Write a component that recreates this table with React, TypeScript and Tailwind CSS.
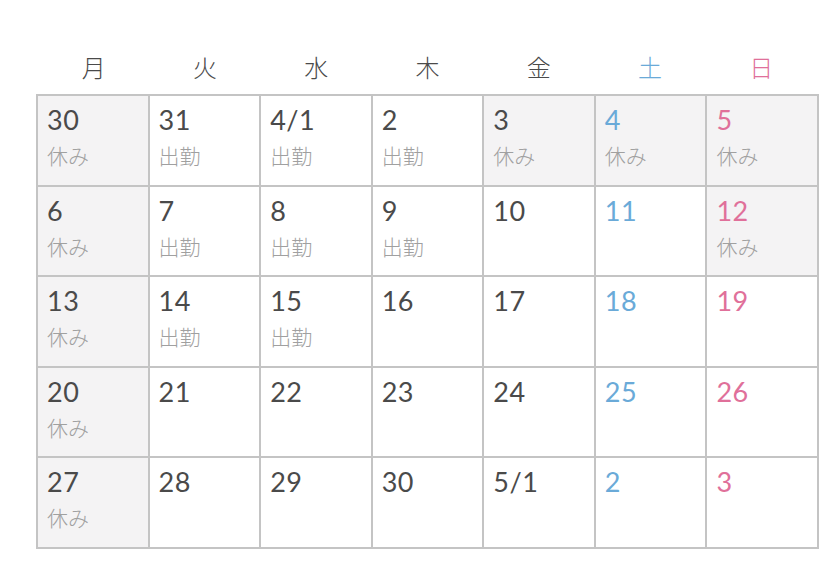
const days = ["月", "火", "水", "木", "金", "土", "日"];

type Cell = { d: string; label?: string; off?: boolean };

const weeks: Cell[][] = [
  [
    { d: "30", label: "休み", off: true },
    { d: "31", label: "出勤" },
    { d: "4/1", label: "出勤" },
    { d: "2", label: "出勤" },
    { d: "3", label: "休み", off: true },
    { d: "4", label: "休み", off: true },
    { d: "5", label: "休み", off: true },
  ],
  [
    { d: "6", label: "休み", off: true },
    { d: "7", label: "出勤" },
    { d: "8", label: "出勤" },
    { d: "9", label: "出勤" },
    { d: "10" },
    { d: "11" },
    { d: "12", label: "休み", off: true },
  ],
  [
    { d: "13", label: "休み", off: true },
    { d: "14", label: "出勤" },
    { d: "15", label: "出勤" },
    { d: "16" },
    { d: "17" },
    { d: "18" },
    { d: "19" },
  ],
  [
    { d: "20", label: "休み", off: true },
    { d: "21" },
    { d: "22" },
    { d: "23" },
    { d: "24" },
    { d: "25" },
    { d: "26" },
  ],
  [
    { d: "27", label: "休み", off: true },
    { d: "28" },
    { d: "29" },
    { d: "30" },
    { d: "5/1" },
    { d: "2" },
    { d: "3" },
  ],
];

function dayColor(i: number) {
  if (i === 5) return "text-[#6aaad8]";
  if (i === 6) return "text-[#e0709a]";
  return "text-[#4a4a4a]";
}

export default function App() {
  return (
    <main
      className="w-[840px] h-[583px] bg-white pl-[36px] pt-[48px]"
      style={{ fontFamily: "Lato, 'Noto Sans CJK JP', sans-serif" }}
    >
      <div className="w-[783px]">
        {/* weekday header */}
        <div className="grid grid-cols-7 h-[46px] px-[2px]">
          {days.map((d, i) => (
            <div key={d} className={`text-center text-[24px] leading-[40px] font-light ${dayColor(i)}`}>
              {d}
            </div>
          ))}
        </div>

        {/* calendar grid */}
        <div className="grid grid-cols-7 gap-[2px] p-[2px] bg-[#c4c4c4]">
          {weeks.flat().map((c, idx) => {
            const col = idx % 7;
            return (
              <div
                key={idx}
                className={`h-[88.6px] pl-[9px] pt-[7px] ${c.off ? "bg-[#f4f3f4]" : "bg-white"}`}
              >
                <div className={`text-[27px] leading-[34px] tracking-[0.5px] ${dayColor(col)}`}>{c.d}</div>
                {c.label && (
                  <div className="text-[21px] leading-[28px] font-light text-[#a0a0a0] mt-[5px]">{c.label}</div>
                )}
              </div>
            );
          })}
        </div>
      </div>
    </main>
  );
}
